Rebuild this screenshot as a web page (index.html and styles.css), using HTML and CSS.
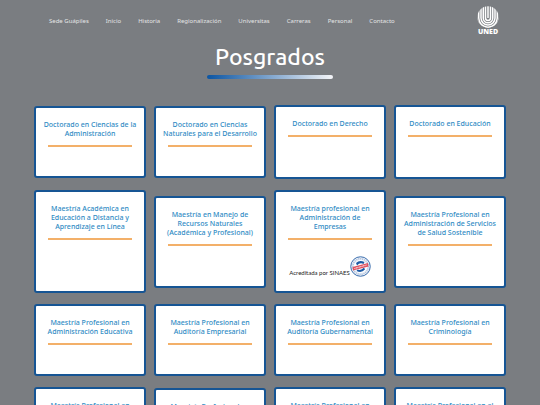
FILE: index.html
```html
<!DOCTYPE html>
<html lang="es">
<head>
  <meta charset="UTF-8">
  <meta name="viewport" content="width=device-width, initial-scale=1.0">
  <title>Posgrados - Sede Guápiles</title>
  <link rel="stylesheet" href="styles.css">
</head>
<body>
  <header class="header">
    <nav class="menu">
      <a href="#">Sede Guápiles</a>
      <a href="#">Inicio</a>
      <a href="#">Historia</a>
      <a href="#">Regionalización</a>
      <a href="#">Universitas</a>
      <a href="#">Carreras</a>
      <a href="#">Personal</a>
      <a href="#">Contacto</a>
    </nav>
    <a class="logo" href="#">
      <svg viewBox="0 0 44 44" width="22" height="22" aria-hidden="true">
        <defs>
          <clipPath id="circulo"><circle cx="22" cy="22" r="21.5"/></clipPath>
        </defs>
        <g clip-path="url(#circulo)" fill="none" stroke="#fff" stroke-width="3">
          <path d="M22 0V24"/>
          <path d="M17 0V24a5 5 0 0 0 10 0V0"/>
          <path d="M12.500 0V24a9.500 9.500 0 0 0 19 0V0"/>
          <path d="M8 0V24a14 14 0 0 0 28 0V0"/>
          <path d="M3.500 0V24a18.500 18.500 0 0 0 37 0V0"/>
          <path d="M-1 0V22a23 22 0 0 0 46 0V0"/>
        </g>
      </svg>
      <span>UNED</span>
    </a>
  </header>

  <main>
    <h1 class="title">Posgrados</h1>

    <section class="cards">
      <article class="card">
        <h2>Doctorado en Ciencias de la<br>Administración</h2>
        <div class="info"></div>
      </article>
      <article class="card">
        <h2>Doctorado en Ciencias<br>Naturales para el Desarrollo</h2>
        <div class="info"></div>
      </article>
      <article class="card">
        <h2>Doctorado en Derecho</h2>
        <div class="info medium"></div>
      </article>
      <article class="card">
        <h2>Doctorado en Educación</h2>
        <div class="info medium"></div>
      </article>

      <article class="card">
        <h2>Maestría Académica en<br>Educación a Distancia y<br>Aprendizaje en Línea</h2>
        <div class="info large"></div>
      </article>
      <article class="card">
        <h2>Maestría en Manejo de<br>Recursos Naturales<br>(Académica y Profesional)</h2>
        <div class="info medium"></div>
      </article>
      <article class="card">
        <h2>Maestría profesional en<br>Administración de<br>Empresas</h2>
        <div class="info large sinaes">
          <span>Acreditada por SINAES</span>
          <svg viewBox="0 0 42 42" width="21" height="21" aria-hidden="true">
            <circle cx="21" cy="21" r="19.500" fill="#e9eef6" stroke="#3c6fae" stroke-width="2"/>
            <circle cx="21" cy="21" r="15.500" fill="none" stroke="#a9bddb" stroke-width="3" stroke-dasharray="2 2"/>
            <circle cx="21" cy="21" r="13" fill="#fff"/>
            <path d="M12 14Q19 7 29 12L27 16Q20 12 14 19Z" fill="#1c5aa5"/>
            <path d="M30 27Q23 35 13 30L15 27Q22 30 28 23Z" fill="#1c5aa5"/>
            <path d="M5 22L36 14L37 21L6 29Z" fill="#e05260"/>
            <path d="M9 25L33 18" stroke="#fff" stroke-width="2" stroke-dasharray="2 1"/>
          </svg>
        </div>
      </article>
      <article class="card">
        <h2>Maestría Profesional en<br>Administración de Servicios<br>de Salud Sostenible</h2>
        <div class="info medium"></div>
      </article>

      <article class="card">
        <h2>Maestría Profesional en<br>Administración Educativa</h2>
        <div class="info"></div>
      </article>
      <article class="card">
        <h2>Maestría Profesional en<br>Auditoría Empresarial</h2>
        <div class="info"></div>
      </article>
      <article class="card">
        <h2>Maestría Profesional en<br>Auditoría Gubernamental</h2>
        <div class="info"></div>
      </article>
      <article class="card">
        <h2>Maestría Profesional en<br>Criminología</h2>
        <div class="info"></div>
      </article>

      <article class="card">
        <h2>Maestría Profesional en<br>Derechos Humanos</h2>
        <div class="info"></div>
      </article>
      <article class="card">
        <h2>Maestría Profesional en<br>Mercadeo</h2>
        <div class="info small"></div>
      </article>
      <article class="card">
        <h2>Maestría Profesional en<br>Psicopedagogía</h2>
        <div class="info"></div>
      </article>
      <article class="card">
        <h2>Maestría Profesional en el<br>Estudio de la Violencia</h2>
        <div class="info"></div>
      </article>
    </section>
  </main>
</body>
</html>
```
FILE: styles.css
```css
* {
  margin: 0;
  padding: 0;
  box-sizing: border-box;
}
body {
  background-color: #7a7d81;
  font-family: "Noto Sans", sans-serif;
}
a {
  text-decoration: none;
}

/* menu */
.header {
  display: flex;
  justify-content: space-between;
  align-items: flex-start;
  padding: 6px 41px 0 49px;
}
.menu {
  display: flex;
  gap: 17px;
  padding-top: 10px;
}
.menu a {
  color: #e4e5e6;
  font-size: 6px;
  line-height: 10px;
}
.logo {
  display: flex;
  flex-direction: column;
  align-items: center;
  color: #fff;
  font-family: "Open Sans", sans-serif;
  font-size: 7px;
  font-weight: 800;
  line-height: 8px;
}

/* titulo */
.title {
  width: fit-content;
  margin: 6px auto 0;
  color: #fff;
  font-family: "Ubuntu", "Noto Sans", sans-serif;
  font-size: 23px;
  font-weight: 500;
  line-height: 30px;
}
.title::after {
  content: "";
  display: block;
  height: 4px;
  margin: 3px -8px 0;
  border-radius: 2px;
  background: linear-gradient(to right, #0b55a3, #f4f5f8);
}

/* tarjetas */
.cards {
  display: grid;
  grid-template-columns: repeat(4, 1fr);
  align-items: center;
  gap: 11px 8px;
  padding: 26px 34px;
}
.card {
  padding: 12px 0 0;
  border: 2px solid #165594;
  border-radius: 3px;
  background-color: #fff;
}
.card h2 {
  color: #2f8bc4;
  font-size: 7px;
  font-weight: 500;
  line-height: 9px;
  text-align: center;
  white-space: nowrap;
}
.card h2::after {
  content: "";
  display: block;
  width: 78%;
  height: 2px;
  margin: 7px auto 0;
  background-color: #f3b069;
}
.info {
  min-height: 29px;
}
.info.small {
  min-height: 27px;
}
.info.medium {
  min-height: 40px;
}
.info.large {
  min-height: 51px;
}
.sinaes {
  display: flex;
  align-items: flex-end;
  justify-content: center;
  padding-bottom: 14px;
  color: #222;
  font-family: "Lato", sans-serif;
  font-size: 6px;
  line-height: 8px;
  white-space: nowrap;
}
```
